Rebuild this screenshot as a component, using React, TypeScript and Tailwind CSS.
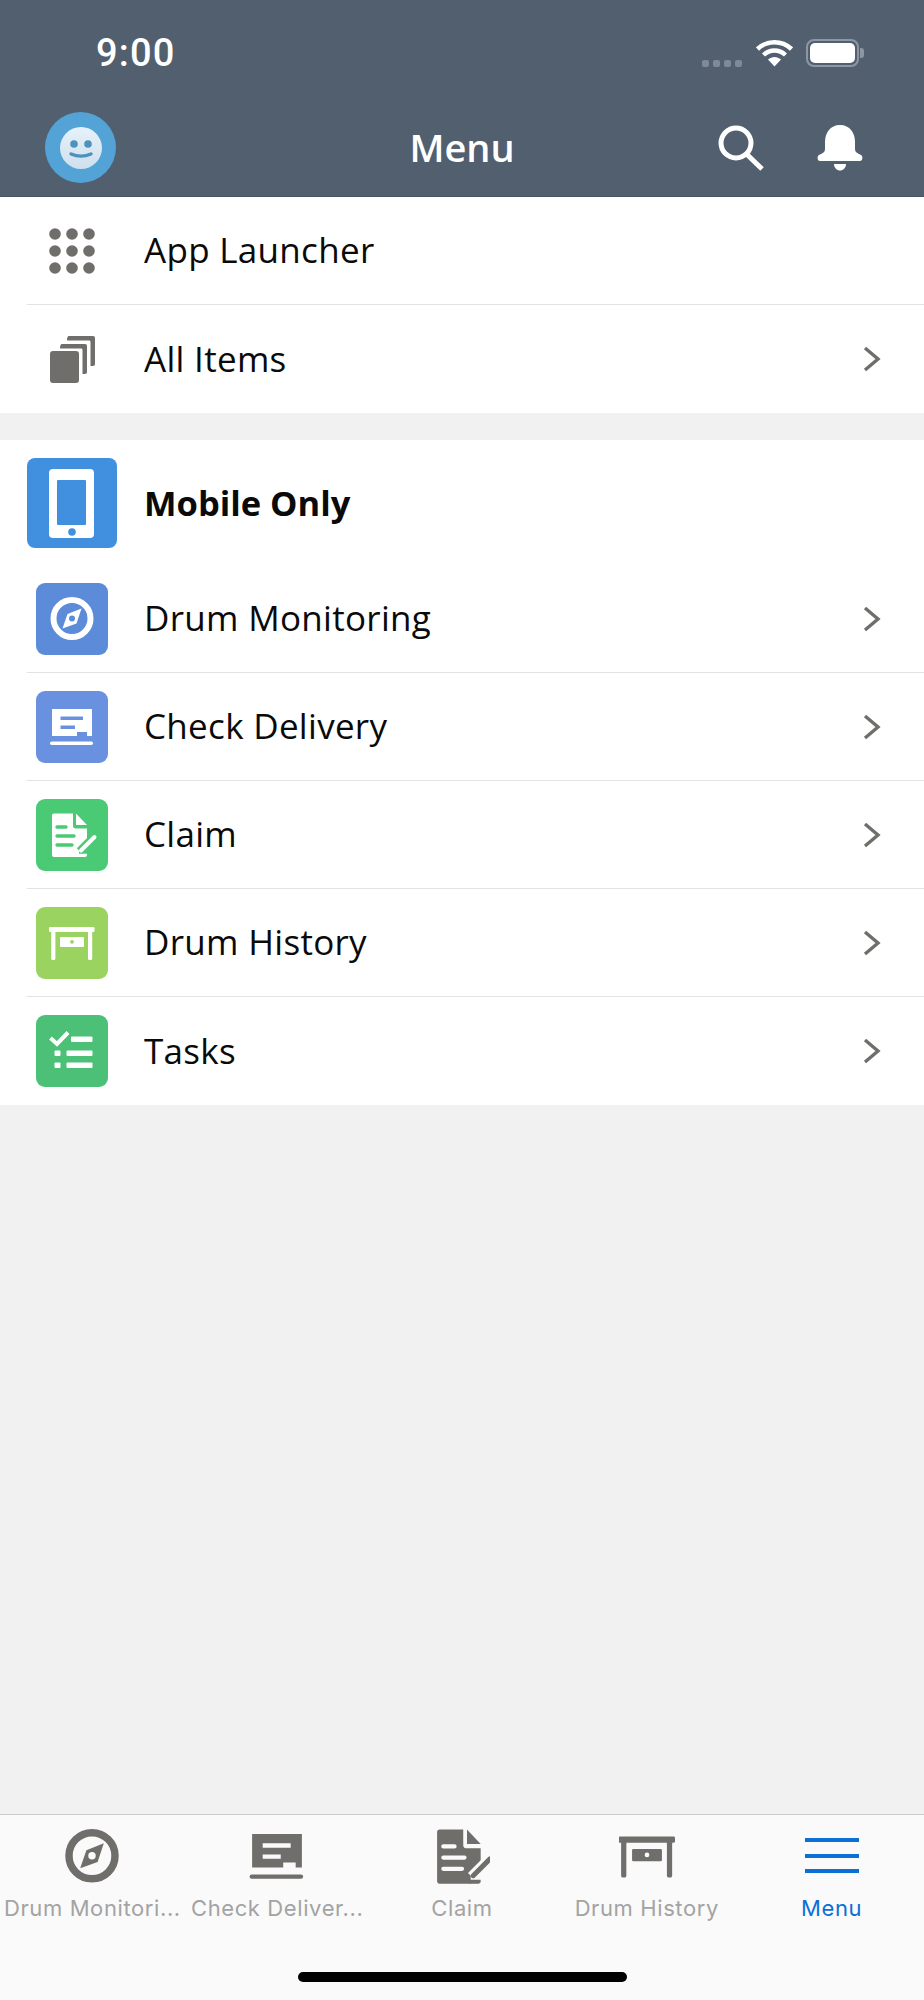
import React from "react";

const GRAY = "#706e6b";

function Compass({ fg, bg }: { fg: string; bg: string }) {
  return (
    <>
      <circle cx="36" cy="35.5" r="18.5" fill="none" stroke={fg} strokeWidth="6" />
      <path d="M45.5 25.5L40.5 40.5L26.5 45.5L31.5 31Z" fill={fg} />
      <circle cx="36" cy="35.5" r="3" fill={bg} />
    </>
  );
}
function Delivery({ fg }: { fg: string; bg: string }) {
  return (
    <>
      <path
        fillRule="evenodd"
        d="M16 18H56V45H51V41H41V45H16ZM24.5 25.5V29H47V25.5ZM24.5 34.5V38H39V34.5Z"
        fill={fg}
      />
      <rect x="14" y="50.5" width="43" height="3.5" rx="1.7" fill={fg} />
    </>
  );
}
function Claim({ fg, bg }: { fg: string; bg: string }) {
  return (
    <>
      <path
        d="M18 14.5H37V27C37 28.5 38 29.500 39.500 29.500H51V40L43 49V58H18C16.800 58 16 57.200 16 56V16.500C16 15.300 16.800 14.500 18 14.500Z"
        fill={fg}
      />
      <path d="M40 14.500L51 26H40Z" fill={fg} />
      <path d="M21 28H30M21 37H38M21 46H36" stroke={bg} strokeWidth="3.4" strokeLinecap="round" />
      <path d="M58.500 38L44 52.500" stroke={bg} strokeWidth="9" />
      <path d="M58.500 38L45 51.500" stroke={fg} strokeWidth="4" strokeLinecap="round" />
      <path d="M42 54.800H51V56C51 57.200 50.200 58 49 58H42Z" fill={fg} />
    </>
  );
}
function Desk({ fg, bg }: { fg: string; bg: string }) {
  return (
    <>
      <rect x="13" y="20" width="45.5" height="5" rx="1.2" fill={fg} />
      <rect x="15.2" y="24" width="4.2" height="29" rx="1.5" fill={fg} />
      <rect x="52" y="24" width="4.2" height="29" rx="1.5" fill={fg} />
      <rect x="24" y="30" width="24" height="10" rx="1" fill={fg} />
      <circle cx="36" cy="34.8" r="1.9" fill={bg} />
    </>
  );
}
function Tasks({ fg }: { fg: string; bg: string }) {
  return (
    <>
      <path d="M14.5 23L21 29L32 17.5" fill="none" stroke={fg} strokeWidth="4" />
      <rect x="35" y="21.5" width="21.5" height="5.5" rx="1" fill={fg} />
      <rect x="30.5" y="35.5" width="26" height="5.5" rx="1" fill={fg} />
      <rect x="30.5" y="47.5" width="26" height="5.5" rx="1" fill={fg} />
      <rect x="18.5" y="35.5" width="6" height="5.5" rx="1" fill={fg} />
      <rect x="18.5" y="47.5" width="6" height="5.5" rx="1" fill={fg} />
    </>
  );
}

function Chevron() {
  return (
    <svg width="20" height="28" viewBox="0 0 20 28" className="mr-[42px] shrink-0">
      <path d="M3 3L16 14L3 25" fill="none" stroke={GRAY} strokeWidth="3.4" />
    </svg>
  );
}

const items = [
  { label: "Drum Monitoring", color: "#5c8bd9", Icon: Compass },
  { label: "Check Delivery", color: "#6a90e0", Icon: Delivery },
  { label: "Claim", color: "#4bca76", Icon: Claim },
  { label: "Drum History", color: "#9ad35f", Icon: Desk },
  { label: "Tasks", color: "#4bc076", Icon: Tasks },
];

const tabs = [
  { label: "Drum Monitori...", Icon: Compass },
  { label: "Check Deliver...", Icon: Delivery },
  { label: "Claim", Icon: Claim },
  { label: "Drum History", Icon: Desk },
];

function Row({ icon, label, chevron, last }: { icon: React.ReactNode; label: string; chevron?: boolean; last?: boolean }) {
  return (
    <div className={`ml-[27px] h-[108px] flex items-center ${last ? "" : "border-b-[1.5px] border-[#e3e3e3]"}`}>
      <div className="w-[90px] mr-[27px] flex justify-center shrink-0">{icon}</div>
      <span className="flex-1 text-[35px] tracking-[0.3px] text-[#0a0a0a]">{label}</span>
      {chevron && <Chevron />}
    </div>
  );
}

export default function App() {
  return (
    <div className="w-[924px] h-[2000px] flex flex-col bg-[#f1f1f1] font-['Open_Sans',sans-serif]">
      <header className="h-[197px] shrink-0 bg-[#525f6f] border-b border-[#465362] text-white">
        <div className="h-[103px] flex items-center pt-[2px]">
          <span className="ml-[96px] text-[38px] tracking-[1.2px] font-medium font-['Roboto',sans-serif] leading-none">9:00</span>
          <div className="ml-auto mr-[65px] flex items-center">
            <div className="flex gap-[4px] mt-[22px] mr-[14px]">
              {[0, 1, 2, 3].map((i) => (
                <span key={i} className="w-[7px] h-[7px] rounded-[2px] bg-[#7e8a98]" />
              ))}
            </div>
            <svg width="37" height="28" viewBox="0 0 37 28" className="mr-[13px]">
              <path d="M1.5 10C11 1 26 1 35.5 10" fill="none" stroke="white" strokeWidth="4.6" />
              <path d="M7.5 16C14 10 23 10 29.5 16" fill="none" stroke="white" strokeWidth="4.4" />
              <path d="M12 20.5C16 17 21 17 25 20.5L18.5 27.5Z" fill="white" />
            </svg>
            <div className="relative w-[53px] h-[28px] rounded-[8px] border-2 border-[#8d97a3] p-[2px]">
              <div className="w-full h-full rounded-[5px] bg-white" />
              <span className="absolute right-[-7px] top-[7px] w-[4px] h-[10px] rounded-r-[3px] bg-[#8d97a3]" />
            </div>
          </div>
        </div>
        <div className="h-[93px] grid grid-cols-3 pl-[45px] pr-[61px]">
          <div className="w-[71px] h-[71px] mt-[9px] rounded-full bg-[#53a3d6] flex items-center justify-center">
            <svg width="42" height="42" viewBox="0 0 42 42">
              <defs>
                <linearGradient id="face" x1="0" y1="0" x2="0" y2="1">
                  <stop offset="0" stopColor="#e6f2fb" />
                  <stop offset="1" stopColor="#cfdfec" />
                </linearGradient>
              </defs>
              <circle cx="21" cy="21" r="21" fill="url(#face)" />
              <circle cx="14" cy="17" r="3.8" fill="#4d92bd" />
              <circle cx="28" cy="17" r="3.8" fill="#4d92bd" />
              <path d="M11 27C17 29.5 25 29.5 31 27" fill="none" stroke="#4d92bd" strokeWidth="3.4" strokeLinecap="round" />
            </svg>
          </div>
          <span className="self-center justify-self-center whitespace-nowrap ml-[16px] mt-[-6px] text-[38px] font-semibold leading-none">Menu</span>
          <div className="flex items-start justify-end gap-[52px] pt-[22px]">
            <svg width="47" height="47" viewBox="0 0 47 47">
              <circle cx="18" cy="18" r="15" fill="none" stroke="white" strokeWidth="5" />
              <path d="M28.5 29L44 44" stroke="white" strokeWidth="5" />
            </svg>
            <svg width="46" height="46" viewBox="0 0 46 46">
              <path
                d="M23 0C33 0 38 8 38 17V24C38 27 40 28 44 30C46 31 46 36 43 36H3C0 36 0 31 2 30C6 28 8 27 8 24V17C8 8 13 0 23 0Z"
                fill="white"
              />
              <path d="M17 39H29C29 43 26 45.500 23 45.500C20 45.500 17 43 17 39Z" fill="white" />
            </svg>
          </div>
        </div>
      </header>

      <section className="bg-white shrink-0">
        <Row
          label="App Launcher"
          icon={
            <svg width="46" height="46" viewBox="0 0 46 46">
              {[6, 23, 40].flatMap((y) =>
                [6, 23, 40].map((x) => <circle key={`${x}-${y}`} cx={x} cy={y} r="5.800" fill={GRAY} />)
              )}
            </svg>
          }
        />
        <Row
          last
          chevron
          label="All Items"
          icon={
            <svg width="45" height="47" viewBox="0 0 45 47">
              <path d="M19 0H43C44.200 0 45 .8 45 2V28C45 29 44.200 30 43 30H40.500V6C40.500 5 40 4.500 39 4.500H17C17 2 17.500 0 19 0Z" fill={GRAY} />
              <path d="M12 8H35C36.200 8 37 8.800 37 10V36C37 37 36.200 38 35 38H32.500V14C32.500 13 32 12.500 31 12.500H10C10 10 10.500 8 12 8Z" fill={GRAY} />
              <rect x="0" y="15" width="29" height="32" rx="3" fill={GRAY} />
            </svg>
          }
        />
      </section>

      <section className="mt-[27px] bg-white shrink-0">
        <div className="h-[125px] pl-[27px] pt-[18px] flex items-start">
          <svg width="90" height="90" viewBox="0 0 90 90" className="mr-[27px]">
            <rect width="90" height="90" rx="8" fill="#4190e0" />
            <rect x="22" y="11" width="45" height="69" rx="4" fill="white" />
            <rect x="30" y="22" width="29" height="45" rx="1" fill="#4190e0" />
            <circle cx="45" cy="74" r="3.800" fill="#4190e0" />
          </svg>
          <span className="text-[34.500px] leading-[90px] font-bold text-[#0a0a0a]">Mobile Only</span>
        </div>
        {items.map(({ label, color, Icon }, i) => (
          <Row
            key={label}
            label={label}
            chevron
            last={i === items.length - 1}
            icon={
              <svg width="72" height="72" viewBox="0 0 72 72">
                <rect width="72" height="72" rx="9" fill={color} />
                <Icon fg="white" bg={color} />
              </svg>
            }
          />
        ))}
      </section>

      <div className="flex-1" />

      <nav className="h-[186px] shrink-0 bg-[#fafafa] border-t-[1.5px] border-[#cbcbcb] flex flex-col font-['Inter',sans-serif]">
        <div className="grid grid-cols-5 pt-[14px]">
          {tabs.map(({ label, Icon }) => (
            <div key={label} className="flex flex-col items-center">
              <svg width="56" height="56" viewBox="13.500 14 45 45">
                <Icon fg={GRAY} bg="#fafafa" />
              </svg>
              <span className="mt-[9px] text-[22px] tracking-[0.6px] leading-[28px] text-[#a3a3a3] whitespace-nowrap">{label}</span>
            </div>
          ))}
          <div className="flex flex-col items-center">
            <div className="h-[56px] w-[54px] flex flex-col gap-[11.500px] pt-[9px]">
              <span className="h-[4px] bg-[#0b6fd6]" />
              <span className="h-[4px] bg-[#0b6fd6]" />
              <span className="h-[4px] bg-[#0b6fd6]" />
            </div>
            <span className="mt-[9px] text-[22px] tracking-[0.6px] leading-[28px] text-[#0b6fd6]">Menu</span>
          </div>
        </div>
        <div className="mt-auto mb-[18px] mx-auto w-[329px] h-[10px] rounded-full bg-black" />
      </nav>
    </div>
  );
}
